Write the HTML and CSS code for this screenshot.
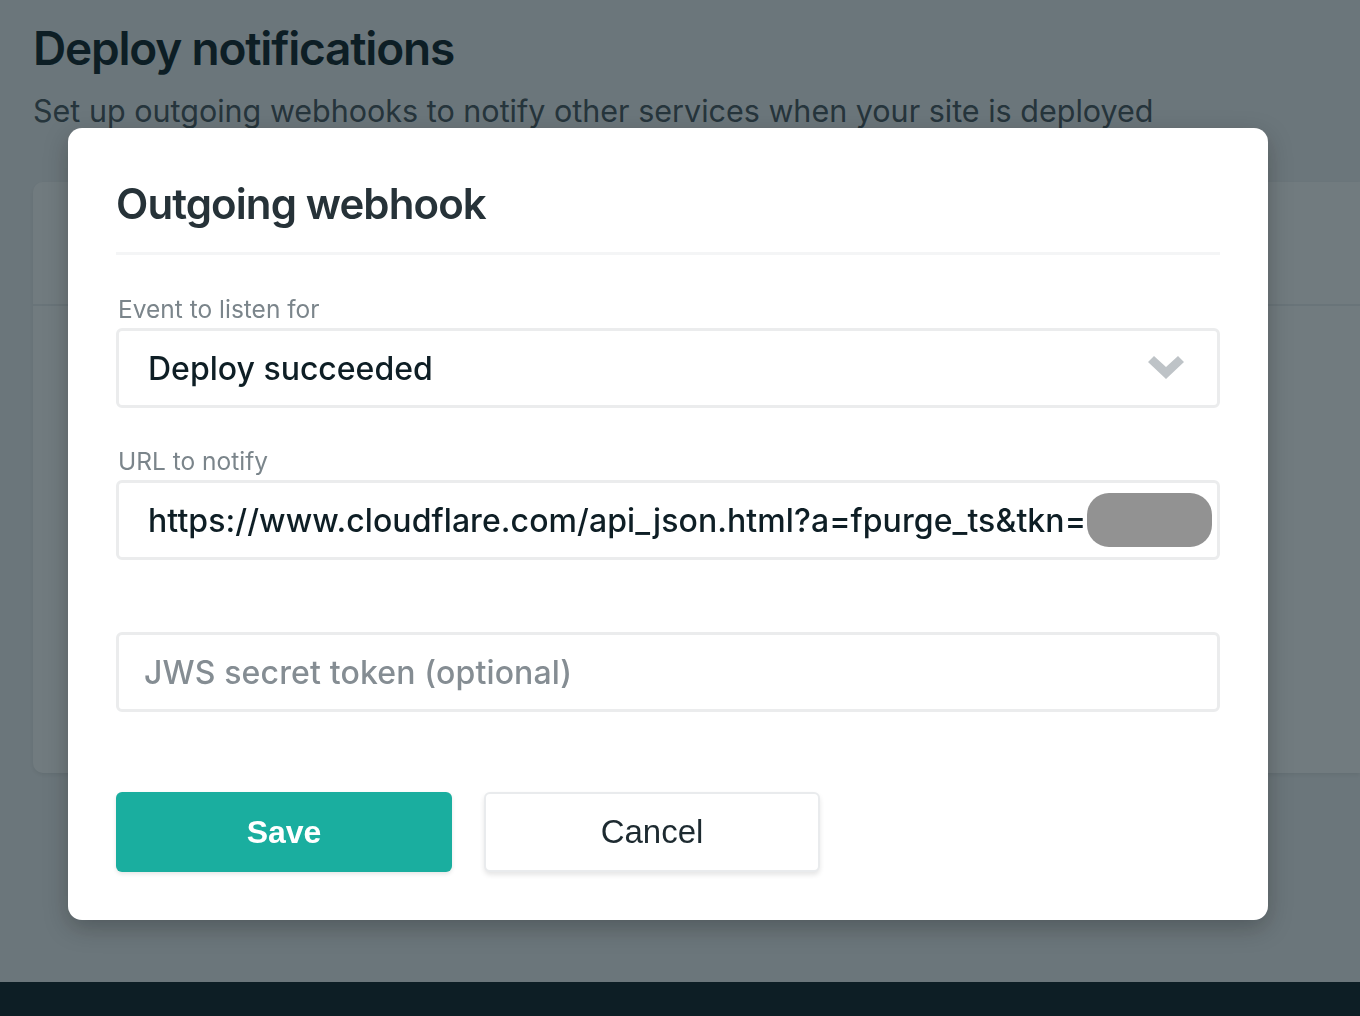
FILE: index.html
```html
<!DOCTYPE html>
<html lang="en">
  <head>
    <meta charset="UTF-8" />
    <meta name="viewport" content="width=device-width, initial-scale=1.0" />
    <title>Deploy notifications</title>
    <link rel="stylesheet" href="styles.css">
  </head>
  <body>
    <div class="page">
      <h1 class="page-title">Deploy notifications</h1>
      <p class="page-sub">Set up outgoing webhooks to notify other services when your site is deployed</p>
      <div class="card">
        <div class="card-head"></div>
        <div class="card-body"></div>
      </div>
    </div>
    <footer class="footer"></footer>

    <div class="overlay">
      <div class="modal">
        <h2 class="modal-title">Outgoing webhook</h2>

        <div class="field">
          <label class="field-label">Event to listen for</label>
          <div class="select">
            <span>Deploy succeeded</span>
            <svg class="chevron" width="36" height="24" viewBox="0 0 36 24">
              <polygon points="0,6 6,0 18,11 30,0 36,6 18,23" fill="#bec3c7" />
            </svg>
          </div>
        </div>

        <div class="field">
          <label class="field-label">URL to notify</label>
          <div class="input url">
            <span>https://www.cloudflare.com/api_json.html?a=fpurge_ts&amp;tkn=</span><span class="redact"></span>
          </div>
        </div>

        <div class="field">
          <label class="field-label"></label>
          <div class="input placeholder">JWS secret token (optional)</div>
        </div>

        <div class="actions">
          <button class="btn btn-save">Save</button>
          <button class="btn btn-cancel">Cancel</button>
        </div>
      </div>
    </div>
  </body>
</html>
```

FILE: styles.css
```css
* {
  margin: 0;
  padding: 0;
  box-sizing: border-box;
}

body {
  font-family: Inter, "Noto Sans", sans-serif;
  background-color: #f1f3f5;
  color: #0e1e25;
  height: 1016px;
  overflow: hidden;
  display: flex;
  flex-direction: column;
}

.page {
  flex: 1;
  padding: 20px 0 0 33px;
}

.page-title {
  font-size: 46px;
  font-weight: 600;
  letter-spacing: -1.2px;
  line-height: 56px;
}

.page-sub {
  font-size: 30.5px;
  line-height: 40px;
  color: #4a555c;
  margin-top: 15px;
}

.card {
  margin-top: 51px;
  height: 591px;
  background-color: #fff;
  border-radius: 10px 0 0 10px;
  box-shadow: 0 2px 4px rgba(0, 0, 0, 0.08);
}

.card-head {
  height: 124px;
  border-bottom: 2px solid #eceef0;
}

.footer {
  height: 34px;
  background-color: #0e1e25;
}

.overlay {
  position: fixed;
  inset: 0;
  background-color: rgba(14, 30, 37, 0.59);
  padding: 128px 0 0 68px;
}

.modal {
  width: 1200px;
  height: 792px;
  background-color: #fff;
  border-radius: 14px;
  padding: 48px;
  box-shadow: 0 8px 24px rgba(0, 0, 0, 0.25);
}

.modal-title {
  font-size: 42px;
  font-weight: 600;
  letter-spacing: -0.9px;
  color: #263238;
  line-height: 56px;
  padding-bottom: 20px;
  border-bottom: 3px solid #f4f5f6;
}

.field {
  margin-top: 38px;
}

.field:first-of-type {
  margin-top: 39px;
}

.field-label {
  display: block;
  height: 30px;
  font-size: 24.5px;
  line-height: 30px;
  color: #7b858b;
  margin: 0 0 4px 2px;
}

.select,
.input {
  height: 80px;
  border: 3px solid #ebeced;
  border-radius: 6px;
  display: flex;
  align-items: center;
  font-size: 32px;
  font-weight: 500;
  padding: 0 0 0 29px;
  color: #0e1e25;
  white-space: nowrap;
  overflow: hidden;
}

.select {
  justify-content: space-between;
  padding-right: 33px;
}

.url {
  letter-spacing: 0.07px;
}

.chevron {
  display: block;
}

.redact {
  display: inline-block;
  flex-shrink: 0;
  width: 125px;
  height: 54px;
  border-radius: 22px;
  background-color: #929292;
  margin-left: 1px;
}

.placeholder {
  color: #858d93;
  padding-left: 25px;
  letter-spacing: 0.15px;
}

.actions {
  display: flex;
  gap: 32px;
  margin-top: 80px;
}

.btn {
  width: 336px;
  height: 80px;
  border-radius: 6px;
  font-family: "Liberation Sans", Arial, sans-serif;
  font-size: 32px;
  cursor: pointer;
}

.btn-save {
  background-color: #1aae9f;
  color: #fff;
  font-weight: 700;
  border: none;
  box-shadow: 0 2px 4px rgba(0, 0, 0, 0.1);
}

.btn-cancel {
  background-color: #fff;
  color: #1d2a30;
  font-size: 33px;
  border: 2px solid #e9ebed;
  box-shadow: 0 3px 5px rgba(0, 0, 0, 0.1);
}
```
